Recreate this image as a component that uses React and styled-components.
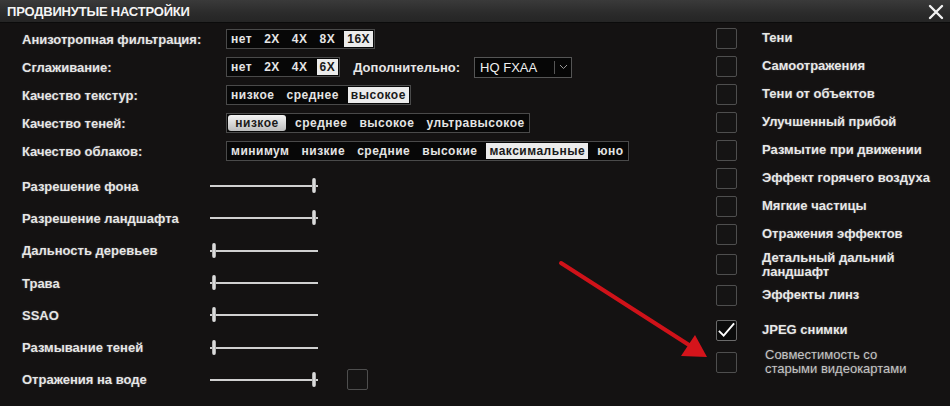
import React from "react";
import styled, { createGlobalStyle } from "styled-components";

const GlobalStyle = createGlobalStyle`
  html, body {
    margin: 0;
    padding: 0;
    background: #141212;
  }
  body {
    font-family: "Liberation Sans", Arial, sans-serif;
  }
`;

const qualityRows = [
  {
    label: "Анизотропная фильтрация:",
    options: ["нет", "2X", "4X", "8X", "16X"],
    selected: 4,
  },
  {
    label: "Сглаживание:",
    options: ["нет", "2X", "4X", "6X"],
    selected: 3,
    extra: true,
  },
  {
    label: "Качество текстур:",
    options: ["низкое", "среднее", "высокое"],
    selected: 2,
  },
  {
    label: "Качество теней:",
    options: ["низкое", "среднее", "высокое", "ультравысокое"],
    selected: 0,
    pill: true,
  },
  {
    label: "Качество облаков:",
    options: ["минимум", "низкие", "средние", "высокие", "максимальные", "юно"],
    selected: 4,
  },
];

const sliders = [
  { label: "Разрешение фона", value: 1 },
  { label: "Разрешение ландшафта", value: 1 },
  { label: "Дальность деревьев", value: 0 },
  { label: "Трава", value: 0 },
  { label: "SSAO", value: 0 },
  { label: "Размывание теней", value: 0 },
  { label: "Отражения на воде", value: 1, check: true },
];

const toggles = [
  { lines: ["Тени"] },
  { lines: ["Самоотражения"] },
  { lines: ["Тени от объектов"] },
  { lines: ["Улучшенный прибой"] },
  { lines: ["Размытие при движении"] },
  { lines: ["Эффект горячего воздуха"] },
  { lines: ["Мягкие частицы"] },
  { lines: ["Отражения эффектов"] },
  { lines: ["Детальный дальний", "ландшафт"], tall: true },
  { lines: ["Эффекты линз"] },
  { lines: ["JPEG снимки"], checked: true, space: 7 },
  { lines: ["Совместимость со", "старыми видеокартами"], space: 4, dim: true },
];

function App() {
  return (
    <>
      <GlobalStyle />
      <Window>
        <TitleBar>
          <Title>ПРОДВИНУТЫЕ НАСТРОЙКИ</Title>
          <CloseButton>
            <svg width="16" height="16" viewBox="0 0 16 16">
              <path
                d="M2 2 L14 14 M14 2 L2 14"
                stroke="#f2f2f2"
                strokeWidth="2.4"
                strokeLinecap="round"
              />
            </svg>
          </CloseButton>
        </TitleBar>
        <Content>
          <LeftColumn>
            {qualityRows.map((row) => (
              <OptionRow key={row.label}>
                <Label>{row.label}</Label>
                <Segments>
                  {row.options.map((opt, i) => (
                    <Segment
                      key={opt}
                      $active={i === row.selected}
                      $pill={row.pill}
                    >
                      {opt}
                    </Segment>
                  ))}
                </Segments>
                {row.extra && (
                  <>
                    <ExtraLabel>Дополнительно:</ExtraLabel>
                    <Dropdown>
                      <DropdownValue>HQ FXAA</DropdownValue>
                      <DropdownArrow>
                        <svg width="9" height="6" viewBox="0 0 9 6">
                          <path
                            d="M1 1 L4.5 4.5 L8 1"
                            stroke="#999"
                            strokeWidth="1"
                            fill="none"
                          />
                        </svg>
                      </DropdownArrow>
                    </Dropdown>
                  </>
                )}
              </OptionRow>
            ))}
            <Sliders>
              {sliders.map((s) => (
                <SliderRow key={s.label}>
                  <SliderLabel>{s.label}</SliderLabel>
                  <Track>
                    <Thumb $max={s.value === 1} />
                  </Track>
                  {s.check && <Box $space={29} />}
                </SliderRow>
              ))}
            </Sliders>
          </LeftColumn>
          <RightColumn>
            {toggles.map((t) => (
              <ToggleRow key={t.lines[0]} $tall={t.tall} $space={t.space}>
                <Box $checked={t.checked}>
                  {t.checked && (
                    <svg width="20" height="16" viewBox="0 0 20 16">
                      <path
                        d="M2 9 L7 14 L18 1"
                        stroke="#fff"
                        strokeWidth="2"
                        fill="none"
                      />
                    </svg>
                  )}
                </Box>
                <ToggleLabel $dim={t.dim}>
                  {t.lines.map((line) => (
                    <div key={line}>{line}</div>
                  ))}
                </ToggleLabel>
              </ToggleRow>
            ))}
          </RightColumn>
          <Arrow width="160" height="110" viewBox="0 0 160 110">
            <path
              d="M2 2 L130 84"
              stroke="#cf1219"
              strokeWidth="4"
              strokeLinecap="round"
            />
            <path d="M148 96 L122 95 L136 74 Z" fill="#d5141b" />
          </Arrow>
        </Content>
      </Window>
    </>
  );
}

const Window = styled.div`
  width: 950px;
  height: 406px;
  overflow: hidden;
  background: #141212;
  color: #ececec;
`;

const TitleBar = styled.div`
  height: 22px;
  display: flex;
  align-items: center;
  justify-content: space-between;
  padding: 0 6px 0 7px;
  background: linear-gradient(#3a3a3a, #2b2b2b 60%, #252525);
  border-bottom: 1px solid #0b0b0b;
`;

const Title = styled.div`
  font-size: 13px;
  font-weight: bold;
  color: #f4f4f4;
  letter-spacing: -0.2px;
`;

const CloseButton = styled.div`
  display: flex;
  align-items: center;
  margin-top: 2px;
`;

const Content = styled.div`
  position: relative;
  display: flex;
  padding-top: 2px;
`;

const LeftColumn = styled.div`
  width: 694px;
  padding-left: 22px;
  box-sizing: border-box;
`;

const OptionRow = styled.div`
  height: 28px;
  display: flex;
  align-items: center;
`;

const Label = styled.div`
  width: 204px;
  font-size: 13px;
  font-weight: bold;
  color: #e6e6e6;
  text-shadow: 0 0 2px rgba(255, 255, 255, 0.25);
`;

const Segments = styled.div`
  display: flex;
  align-items: center;
  height: 20px;
  box-sizing: border-box;
  padding: 1px 1px;
  gap: 6px;
  border: 1px solid #4a4a4a;
  background: #070707;
`;

const Segment = styled.div`
  height: 16px;
  line-height: 16px;
  padding: 0 3px;
  font-size: 12px;
  font-weight: bold;
  letter-spacing: 0.5px;
  white-space: nowrap;
  color: ${(p) => (p.$active ? "#1a1a1a" : "#e4e4e4")};
  background: ${(p) =>
    p.$active
      ? p.$pill
        ? "linear-gradient(#f4f4f4, #bdbdbd)"
        : "#ececec"
      : "transparent"};
  border-radius: ${(p) => (p.$pill ? "3px" : "0")};
  min-width: ${(p) => (p.$pill ? "52px" : "0")};
  text-align: center;
`;

const ExtraLabel = styled.div`
  margin-left: 13px;
  font-size: 13px;
  font-weight: bold;
  color: #e6e6e6;
`;

const Dropdown = styled.div`
  margin-left: 14px;
  width: 98px;
  height: 21px;
  box-sizing: border-box;
  display: flex;
  align-items: center;
  border: 1px solid #555;
  background: #060606;
`;

const DropdownValue = styled.div`
  flex: 1;
  padding-left: 5px;
  font-size: 13px;
  color: #f0f0f0;
`;

const DropdownArrow = styled.div`
  width: 16px;
  height: 13px;
  display: flex;
  align-items: center;
  justify-content: center;
  border-left: 1px solid #555;
`;

const Sliders = styled.div`
  margin-top: 5px;
`;

const SliderRow = styled.div`
  height: 32.3px;
  display: flex;
  align-items: center;
`;

const SliderLabel = styled.div`
  width: 188px;
  font-size: 13px;
  font-weight: bold;
  color: #e6e6e6;
  text-shadow: 0 0 2px rgba(255, 255, 255, 0.25);
`;

const Track = styled.div`
  position: relative;
  width: 108px;
  height: 2px;
  background: #d0d0d0;
`;

const Thumb = styled.div`
  position: absolute;
  top: -7px;
  left: ${(p) => (p.$max ? "102px" : "2px")};
  width: 4px;
  height: 15px;
  border-radius: 2px;
  background: linear-gradient(90deg, #9a9a9a, #f0f0f0, #9a9a9a);
`;

const RightColumn = styled.div`
  margin-top: -1px;
  padding-left: 22px;
`;

const ToggleRow = styled.div`
  height: ${(p) => (p.$tall ? "33px" : "28px")};
  margin-top: ${(p) => (p.$space ? `${p.$space}px` : "0")};
  display: flex;
  align-items: center;
`;

const Box = styled.div`
  flex: none;
  width: 21px;
  height: 21px;
  box-sizing: border-box;
  margin-left: ${(p) => (p.$space ? `${p.$space}px` : "0")};
  border: 1px solid ${(p) => (p.$checked ? "#6a6a6a" : "#4e4e4e")};
  border-radius: 2px;
  background: ${(p) => (p.$checked ? "#0b0b0b" : "#151414")};
  display: flex;
  align-items: center;
  justify-content: center;
  overflow: visible;
`;

const ToggleLabel = styled.div`
  margin-left: 25px;
  font-size: 13px;
  font-weight: ${(p) => (p.$dim ? "normal" : "bold")};
  line-height: 14px;
  color: ${(p) => (p.$dim ? "#c4c4c4" : "#e8e8e8")};
  padding-left: ${(p) => (p.$dim ? "3px" : "0")};
  text-shadow: 0 0 2px rgba(255, 255, 255, 0.25);
`;

const Arrow = styled.svg`
  position: absolute;
  left: 559px;
  top: 238px;
  overflow: visible;
`;

export default App;
